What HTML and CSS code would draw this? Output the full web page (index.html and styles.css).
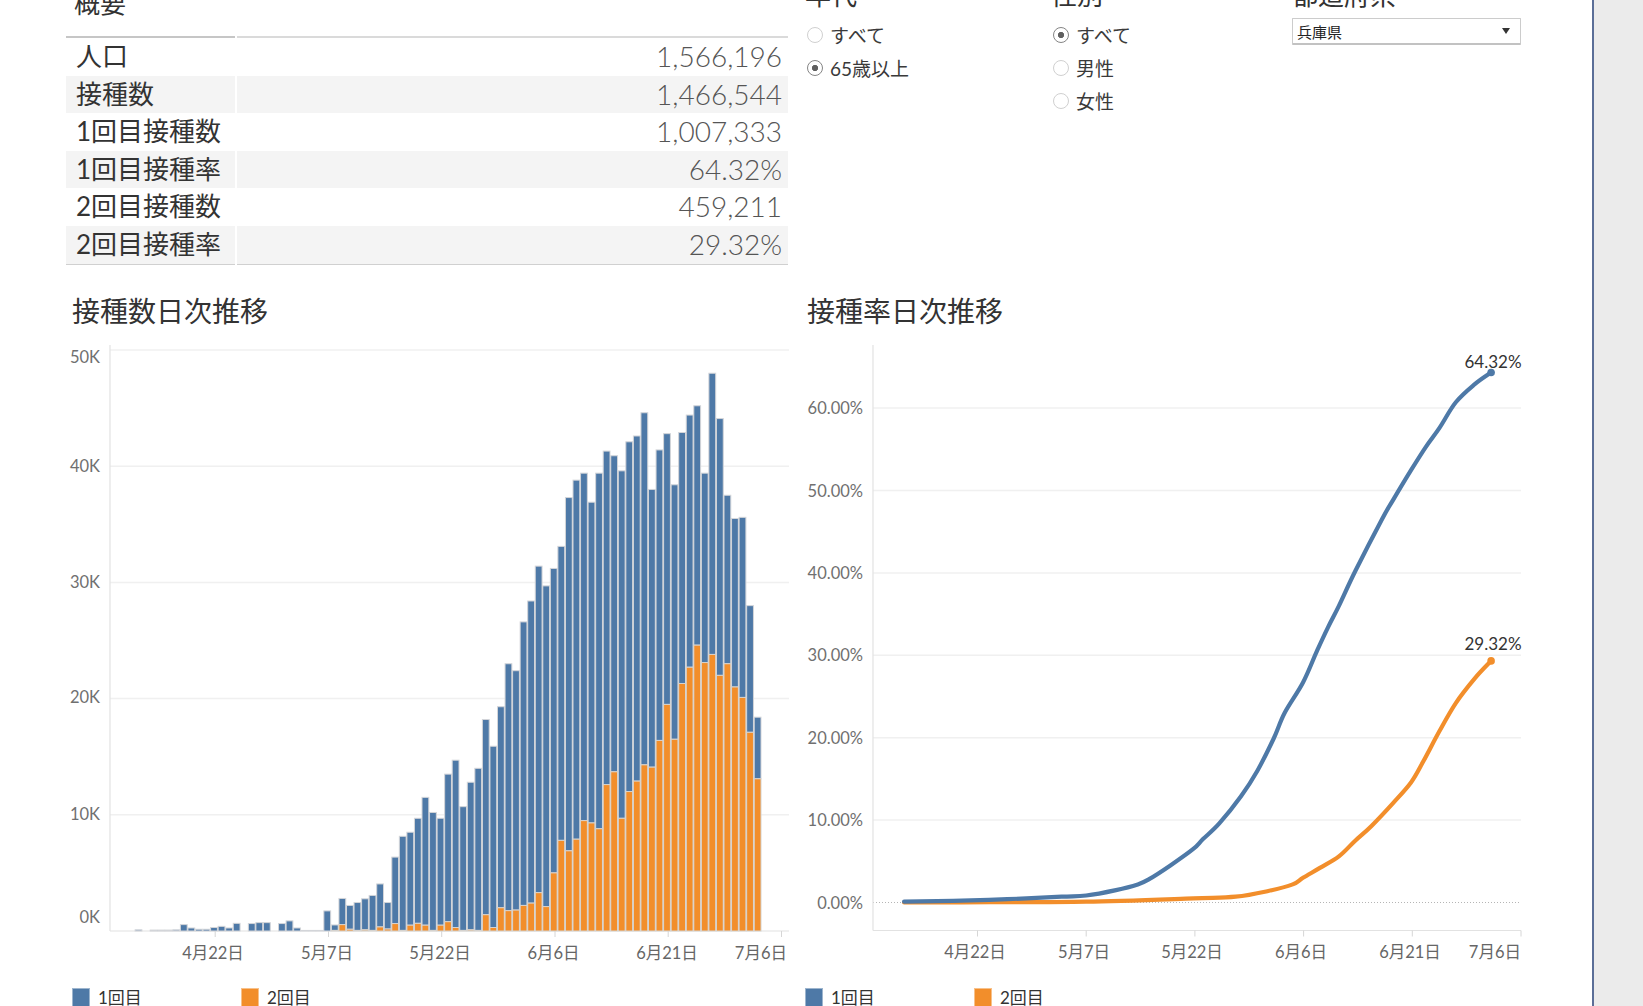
FILE: index.html
```html
<!DOCTYPE html>
<html lang="ja">
<head>
<meta charset="utf-8">
<title>ワクチン接種状況</title>
<link rel="stylesheet" href="styles.css">
</head>
<body>
<div class="dash">
  <main class="main">
    <div class="top-row">
      <section class="summary">
        <h2 class="sec-title">概要</h2>
        <div class="kpi">
          <div class="kpi-row first"><div class="kpi-label">人口</div><div class="kpi-value">1,566,196</div></div>
          <div class="kpi-row alt"><div class="kpi-label">接種数</div><div class="kpi-value">1,466,544</div></div>
          <div class="kpi-row"><div class="kpi-label">1回目接種数</div><div class="kpi-value">1,007,333</div></div>
          <div class="kpi-row alt"><div class="kpi-label">1回目接種率</div><div class="kpi-value">64.32%</div></div>
          <div class="kpi-row"><div class="kpi-label">2回目接種数</div><div class="kpi-value">459,211</div></div>
          <div class="kpi-row alt last"><div class="kpi-label">2回目接種率</div><div class="kpi-value">29.32%</div></div>
        </div>
      </section>

      <section class="filter filter-age">
        <h3 class="filter-title">年代</h3>
        <ul class="radio-list">
          <li class="radio"><span class="radio-dot"></span>すべて</li>
          <li class="radio checked"><span class="radio-dot"></span>65歳以上</li>
        </ul>
      </section>

      <section class="filter filter-sex">
        <h3 class="filter-title">性別</h3>
        <ul class="radio-list">
          <li class="radio checked"><span class="radio-dot"></span>すべて</li>
          <li class="radio"><span class="radio-dot"></span>男性</li>
          <li class="radio"><span class="radio-dot"></span>女性</li>
        </ul>
      </section>

      <section class="filter filter-pref">
        <h3 class="filter-title">都道府県</h3>
        <div class="select"><span>兵庫県</span><span class="caret"></span></div>
      </section>
    </div>

    <div class="chart-row">
      <section class="chart chart-left">
        <h2 class="chart-title">接種数日次推移</h2>
        <svg class="chart-svg" width="730" height="640" viewBox="0 0 730 640">
          <line class="grid" x1="50" y1="20" x2="729" y2="20"/>
          <line class="grid" x1="50" y1="136.2" x2="729" y2="136.2"/>
          <line class="grid" x1="50" y1="252.4" x2="729" y2="252.4"/>
          <line class="grid" x1="50" y1="368.6" x2="729" y2="368.6"/>
          <line class="grid" x1="50" y1="484.8" x2="729" y2="484.8"/>
          <line class="axis" x1="50" y1="15" x2="50" y2="601"/>
          <line class="axis" x1="50" y1="601" x2="729" y2="601"/>
          <line class="tick" x1="155.2" y1="601" x2="155.2" y2="607"/>
          <line class="tick" x1="268.5" y1="601" x2="268.5" y2="607"/>
          <line class="tick" x1="381.7" y1="601" x2="381.7" y2="607"/>
          <line class="tick" x1="495" y1="601" x2="495" y2="607"/>
          <line class="tick" x1="608.2" y1="601" x2="608.2" y2="607"/>
          <line class="tick" x1="721.5" y1="601" x2="721.5" y2="607"/>
          <text class="ylab" x="40" y="27">50K</text>
          <text class="ylab" x="40" y="136">40K</text>
          <text class="ylab" x="40" y="252">30K</text>
          <text class="ylab" x="40" y="367">20K</text>
          <text class="ylab" x="40" y="484">10K</text>
          <text class="ylab" x="40" y="587">0K</text>
          <text class="xlab" x="153" y="623">4月22日</text>
          <text class="xlab" x="267" y="623">5月7日</text>
          <text class="xlab" x="380" y="623">5月22日</text>
          <text class="xlab" x="493.5" y="623">6月6日</text>
          <text class="xlab" x="607" y="623">6月21日</text>
          <text class="xlab xlab-end" x="727" y="623">7月6日</text>
          <g id="bars"></g>
        </svg>
        <div class="legend">
          <div class="legend-item"><span class="swatch blue"></span>1回目</div>
          <div class="legend-item"><span class="swatch orange"></span>2回目</div>
        </div>
      </section>

      <section class="chart chart-right">
        <h2 class="chart-title">接種率日次推移</h2>
        <svg class="chart-svg" width="740" height="640" viewBox="0 0 740 640">
          <line class="grid" x1="83" y1="78.1" x2="731" y2="78.1"/>
          <line class="grid" x1="83" y1="160.5" x2="731" y2="160.5"/>
          <line class="grid" x1="83" y1="242.9" x2="731" y2="242.9"/>
          <line class="grid" x1="83" y1="325.3" x2="731" y2="325.3"/>
          <line class="grid" x1="83" y1="407.7" x2="731" y2="407.7"/>
          <line class="grid" x1="83" y1="490.1" x2="731" y2="490.1"/>
          <line class="zero" x1="83" y1="572.5" x2="731" y2="572.5"/>
          <line class="axis" x1="83" y1="15" x2="83" y2="600.5"/>
          <line class="axis" x1="83" y1="600.5" x2="731" y2="600.5"/>
          <line class="tick" x1="187.5" y1="600.5" x2="187.5" y2="606.5"/>
          <line class="tick" x1="296.2" y1="600.5" x2="296.2" y2="606.5"/>
          <line class="tick" x1="404.9" y1="600.5" x2="404.9" y2="606.5"/>
          <line class="tick" x1="513.6" y1="600.5" x2="513.6" y2="606.5"/>
          <line class="tick" x1="622.3" y1="600.5" x2="622.3" y2="606.5"/>
          <line class="tick" x1="731" y1="600.5" x2="731" y2="606.5"/>
          <text class="ylab" x="73" y="78.1">60.00%</text>
          <text class="ylab" x="73" y="160.5">50.00%</text>
          <text class="ylab" x="73" y="242.9">40.00%</text>
          <text class="ylab" x="73" y="325.3">30.00%</text>
          <text class="ylab" x="73" y="407.7">20.00%</text>
          <text class="ylab" x="73" y="490.1">10.00%</text>
          <text class="ylab" x="73" y="572.5">0.00%</text>
          <text class="xlab" x="185" y="622">4月22日</text>
          <text class="xlab" x="294" y="622">5月7日</text>
          <text class="xlab" x="402" y="622">5月22日</text>
          <text class="xlab" x="511" y="622">6月6日</text>
          <text class="xlab" x="620" y="622">6月21日</text>
          <text class="xlab xlab-end" x="731" y="622">7月6日</text>
          <polyline class="line-orange smooth" points="114.1,572.5 200,572.2 296.2,571.7 403.3,568.4 445.7,566.7 478.3,561 502.7,554.4 513,547.8 529.9,537.9 548.9,526.4 565.2,510.7 581.5,495.9 603.3,472.8 621.2,452.2 633.2,431.6 649.5,401.1 665.8,373.1 684.8,348.4 701.1,330.9"/>
          <polyline class="line-blue smooth" points="114.1,571.7 163,570.9 217.4,569.2 271.7,566.7 296.2,565.5 326,560.1 347.8,554.4 358.7,549.4 380.4,535.4 403.3,518.9 413,509.1 429.3,493.4 451,466.2 467.4,440.7 483.7,408.5 494.6,383 513,352.5 527.2,320.4 538,297.3 548.9,275.9 565.2,241.3 592.4,188.5 603.3,169.6 621.2,139.9 635.9,116.8 649.5,97.9 665.8,72.3 684.8,54.2 701.1,42.5"/>
          <circle class="dot-orange" cx="701.1" cy="330.9" r="3.8"/>
          <circle class="dot-blue" cx="701.1" cy="42.5" r="3.8"/>
          <text class="end-lab" x="703" y="31">64.32%</text>
          <text class="end-lab" x="703" y="313">29.32%</text>
        </svg>
        <div class="legend">
          <div class="legend-item"><span class="swatch blue"></span>1回目</div>
          <div class="legend-item"><span class="swatch orange"></span>2回目</div>
        </div>
      </section>
    </div>
  </main>
  <aside class="side"></aside>
</div>
<script src="script.js"></script>
</body>
</html>
```

FILE: styles.css
```css
* { box-sizing: border-box; }
html, body { margin: 0; padding: 0; }
body {
  width: 1643px;
  height: 1006px;
  overflow: hidden;
  background: #ffffff;
  font-family: Lato, "Noto Sans CJK JP", sans-serif;
  color: #333333;
}
.dash { display: flex; height: 1006px; }
.main { width: 1592px; flex: none; }
.side { flex: 1; background: #ebebeb; border-left: 2px solid #5b6e97; }

/* top row */
.top-row {
  display: flex;
  align-items: flex-start;
  height: 308px;
  margin-top: -13px;
  padding-left: 66px;
}
.summary { width: 722px; flex: none; }
.sec-title, .filter-title, .chart-title {
  margin: 0;
  font-family: "Noto Sans CJK JP", sans-serif;
  font-weight: 400;
  color: #333333;
}
.sec-title { margin: 0 0 19px 8px; font-size: 26px; line-height: 30px; }

.kpi-row { display: flex; gap: 2px; height: 37.5px; }
.kpi-row.first { height: 39.5px; }
.kpi-row.last { height: 39px; }
.kpi-row.first .kpi-label { border-top: 2px solid #c6c6c6; }
.kpi-row.first .kpi-value { border-top: 2px solid #dadada; }
.kpi-row.last .kpi-label,
.kpi-row.last .kpi-value { border-bottom: 1.5px solid #d0d0d0; }
.kpi-row.alt .kpi-label,
.kpi-row.alt .kpi-value { background: #f4f4f4; }
.kpi-label {
  width: 169px;
  flex: none;
  padding-left: 10px;
  font-size: 26px;
  line-height: 37.5px;
  color: #333333;
  white-space: nowrap;
}
.kpi-value {
  flex: 1;
  text-align: right;
  padding-right: 6px;
  font-size: 28px;
  line-height: 37.5px;
  font-weight: 300;
  color: #555555;
}

/* filters */
.filter { flex: none; margin-top: -8px; }
.filter-age { width: 246px; margin-left: 17px; }
.filter-sex { width: 241px; }
.filter-pref { width: 229px; }
.filter-title { margin-bottom: 9px; font-size: 26px; line-height: 30px; white-space: nowrap; }
.radio-list { list-style: none; margin: 0; padding: 0; }
.radio {
  display: flex;
  align-items: center;
  height: 33px;
  font-size: 19px;
  color: #3a3a3a;
  font-family: Lato, "Noto Sans CJK JP", sans-serif;
}
.radio-dot {
  width: 16px;
  height: 16px;
  flex: none;
  margin: 0 7px 0 2px;
  border: 1.5px solid #d0d0d0;
  border-radius: 50%;
  background: #ffffff;
}
.radio.checked .radio-dot {
  border-color: #858585;
  background: radial-gradient(circle, #606060 0 2.8px, #ffffff 3.5px);
}
.select {
  display: flex;
  align-items: center;
  justify-content: space-between;
  height: 27px;
  margin-top: 7px;
  padding: 0 10px 0 4px;
  border: 1px solid #cccccc;
  border-bottom: 2px solid #c2c2c2;
  border-radius: 1px;
  background: #ffffff;
  font-family: "Noto Sans CJK JP", sans-serif;
  font-size: 15px;
  color: #222222;
}
.caret {
  width: 0;
  height: 0;
  border-left: 4px solid transparent;
  border-right: 4px solid transparent;
  border-top: 6px solid #333333;
}

/* charts */
.chart-row { display: flex; }
.chart-left { width: 730px; flex: none; margin-left: 60px; }
.chart-right { width: 740px; flex: none; }
.chart-title { font-size: 28px; line-height: 30px; white-space: nowrap; }
.chart-left .chart-title { padding-left: 12px; }
.chart-right .chart-title { padding-left: 17px; }
.chart-svg { display: block; margin-top: 5px; overflow: visible; }

.grid { stroke: #f0f0f0; stroke-width: 1.5; }
.axis { stroke: #e2e2e2; stroke-width: 1.2; }
.tick { stroke: #d6d6d6; stroke-width: 1; }
.zero { stroke: #b5b5b5; stroke-width: 1; stroke-dasharray: 1 2; }
.ylab {
  font-size: 16.5px;
  fill: #707070;
  text-anchor: end;
  dominant-baseline: central;
}
.xlab {
  font-size: 16.5px;
  fill: #666666;
  text-anchor: middle;
  dominant-baseline: central;
}
.xlab-end { text-anchor: end; }
.end-lab {
  font-size: 17px;
  fill: #333333;
  text-anchor: middle;
  dominant-baseline: central;
}
.bar-blue { fill: #4e79a7; stroke: #d3d5d9; stroke-width: 1; }
.bar-orange { fill: #f28e2b; stroke: #d6d3cf; stroke-width: 1; }
.line-blue, .line-orange {
  fill: none;
  stroke-width: 4.2;
  stroke-linejoin: round;
  stroke-linecap: round;
}
.line-blue { stroke: #4e79a7; }
.line-orange { stroke: #f28e2b; }
.dot-blue { fill: #4e79a7; }
.dot-orange { fill: #f28e2b; }

/* legend */
.legend { display: flex; margin-top: 18px; }
.chart-left .legend { padding-left: 12px; }
.chart-right .legend { padding-left: 15px; }
.legend-item {
  display: flex;
  align-items: flex-start;
  width: 169px;
  flex: none;
  font-size: 17px;
  line-height: 20px;
  color: #333333;
}
.swatch {
  width: 18px;
  height: 22px;
  flex: none;
  margin-right: 8px;
  border: 1px solid rgba(255, 255, 255, 0.45);
}
.swatch.blue { background: #4e79a7; }
.swatch.orange { background: #f28e2b; }
```

FILE: script.js
```js
(function () {
  var data = [
    [0.1,0],[0,0],[0.08,0],[0.08,0],[0.08,0],[0.1,0],[0.55,0],[0.26,0],[0.15,0],[0.15,0],
    [0.3,0],[0.4,0],[0.26,0],[0.66,0],[0,0],[0.64,0],[0.72,0],[0.72,0],[0,0],[0.64,0],
    [0.87,0],[0.26,0],[0.05,0],[0.05,0],[0.05,0],[1.73,0],[0.52,0.05],[2.8,0.55],[2.2,0.15],[2.45,0.05],
    [2.77,0.1],[3.06,0.05],[4.05,0.35],[2.45,0.17],[6.36,0.64],[8.15,0.05],[8.5,0.5],[9.7,0.66],[11.5,0.5],[10.2,0.05],
    [9.7,0.5],
    [13.5,0.8],[14.7,0.3],[10.7,0.05],[12.8,0.1],[14.0,0.05],[18.2,1.4],[15.9,0.3],[19.3,2.0],[23.0,1.75],[22.4,1.8],
    [26.6,2.2],[28.4,2.4],[31.4,3.3],[29.7,2.1],[31.2,5.0],[33.1,7.8],[37.3,6.9],[38.8,7.9],[39.4,9.5],[36.9,9.3],
    [39.4,8.8],[41.3,12.6],[40.9,13.7],[39.6,9.7],[42.1,12.0],[42.6,12.9],[44.6,14.3],[38.0,14.1],[41.4,16.4],[42.8,19.5],
    [38.4,16.5],[42.9,21.3],[44.4,22.7],[45.2,24.6],[39.4,23.1],[48.0,23.8],[44.1,22.0],[37.5,23.0],[35.5,21.0],[35.6,20.1],
    [28.0,17.1],[18.4,13.1]
  ];
  var NS = 'http://www.w3.org/2000/svg';
  var g = document.getElementById('bars');
  var base = 601;
  var k = 11.62;
  function rect(x, y, w, h, cls) {
    var r = document.createElementNS(NS, 'rect');
    r.setAttribute('x', x);
    r.setAttribute('y', y);
    r.setAttribute('width', w);
    r.setAttribute('height', h);
    r.setAttribute('class', cls);
    g.appendChild(r);
  }
  data.forEach(function (d, idx) {
    var i = idx - 40;
    var cx = 380.5 + 7.55 * i;
    var x = (cx - 3.4).toFixed(2);
    if (d[0] <= 0) { return; }
    var th = d[0] * k;
    var oh = d[1] * k;
    if (th - oh > 0) { rect(x, (base - th).toFixed(2), 6.8, (th - oh).toFixed(2), 'bar-blue'); }
    if (oh > 0) { rect(x, (base - oh).toFixed(2), 6.8, oh.toFixed(2), 'bar-orange'); }
  });

  /* smooth the rate lines (Catmull-Rom to cubic Bezier) */
  var lines = document.querySelectorAll('polyline.smooth');
  Array.prototype.forEach.call(lines, function (pl) {
    var pts = pl.getAttribute('points').trim().split(/\s+/).map(function (p) {
      var a = p.split(',');
      return [parseFloat(a[0]), parseFloat(a[1])];
    });
    var d = 'M' + pts[0][0] + ',' + pts[0][1];
    for (var n = 0; n < pts.length - 1; n++) {
      var p0 = pts[n - 1] || pts[n];
      var p1 = pts[n];
      var p2 = pts[n + 1];
      var p3 = pts[n + 2] || p2;
      var c1x = p1[0] + (p2[0] - p0[0]) / 6;
      var c1y = p1[1] + (p2[1] - p0[1]) / 6;
      var c2x = p2[0] - (p3[0] - p1[0]) / 6;
      var c2y = p2[1] - (p3[1] - p1[1]) / 6;
      d += ' C' + c1x.toFixed(2) + ',' + c1y.toFixed(2) + ' ' + c2x.toFixed(2) + ',' + c2y.toFixed(2) + ' ' + p2[0] + ',' + p2[1];
    }
    var path = document.createElementNS(NS, 'path');
    path.setAttribute('d', d);
    path.setAttribute('class', pl.getAttribute('class'));
    pl.parentNode.replaceChild(path, pl);
  });
})();
```
